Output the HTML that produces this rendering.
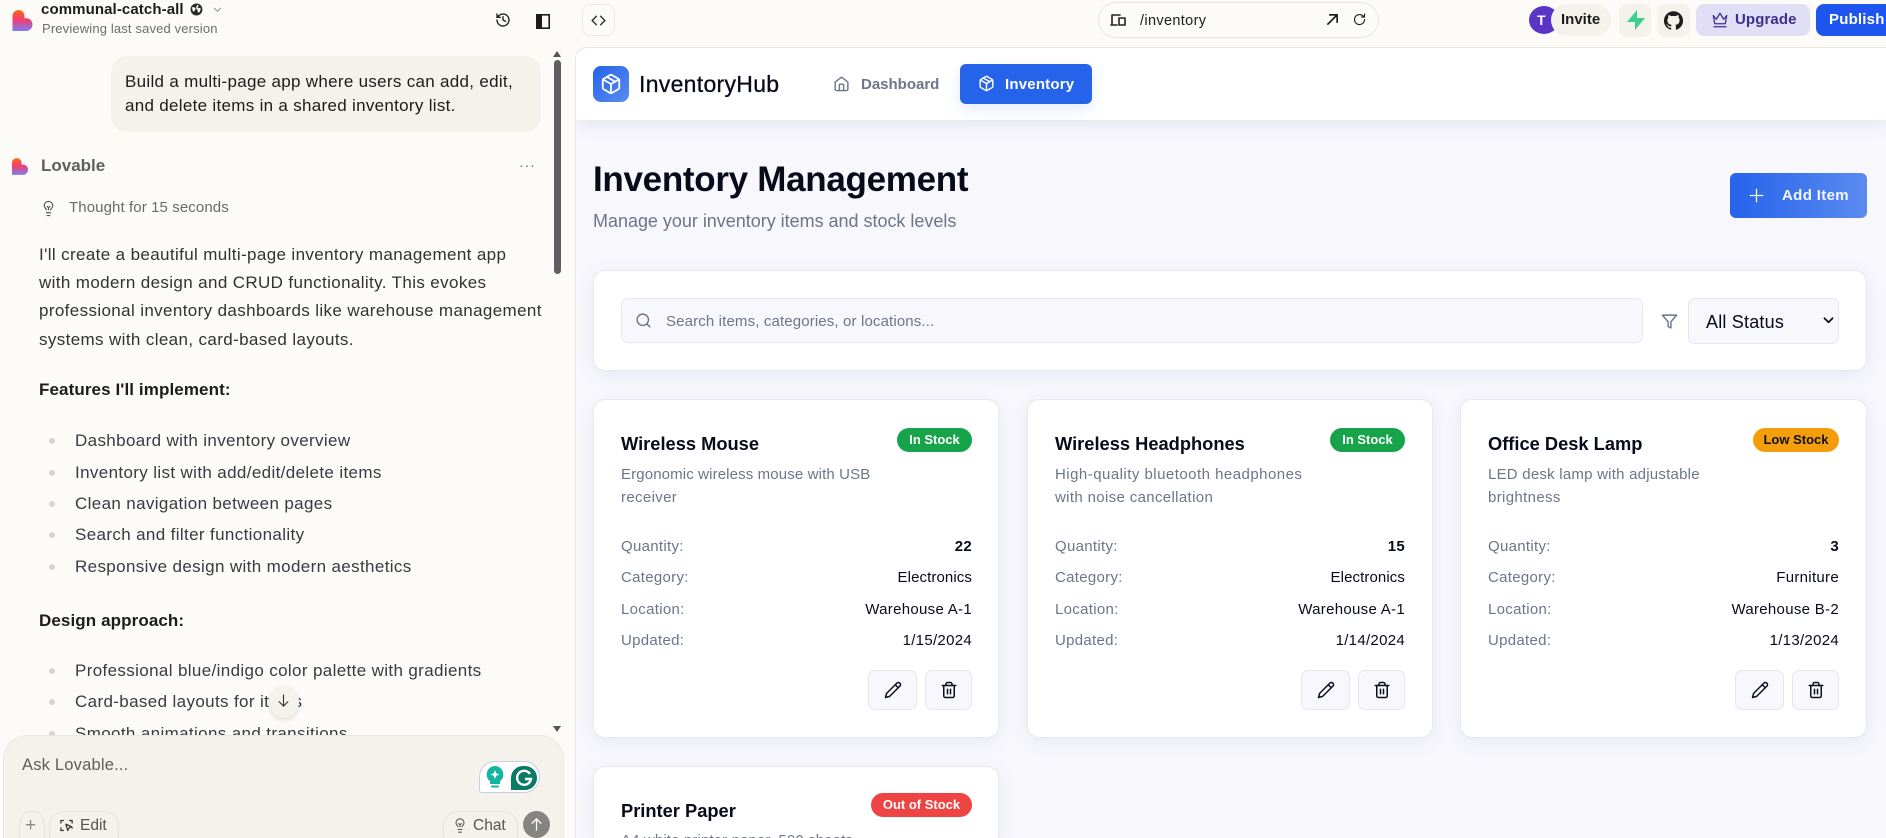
<!DOCTYPE html>
<html><head><meta charset="utf-8"><title>InventoryHub</title>
<style>
*{box-sizing:border-box;margin:0;padding:0}
html,body{width:1886px;height:838px;overflow:hidden;background:#fcfbf8;font-family:"Liberation Sans",sans-serif}
#root{position:relative;width:1886px;height:838px;overflow:hidden;background:#fcfbf8}
.a,.t{position:absolute}
.t{white-space:nowrap;line-height:20px}
svg{position:absolute;overflow:visible}
.ic{fill:none;stroke:currentColor;stroke-width:2;stroke-linecap:round;stroke-linejoin:round}
.p{font-size:17px;color:#33322f;letter-spacing:.37px}
.b{font-size:17px;color:#1c1c1a;font-weight:700;letter-spacing:.1px}
.li{font-size:17px;color:#3a3a40;letter-spacing:.36px;left:75px}
.dot{position:absolute;left:49px;width:6px;height:6px;border-radius:50%;background:#d5d5d5}
.card{position:absolute;background:#fff;border:1px solid #e6e9f1;border-radius:12px;box-shadow:0 4px 18px rgba(90,100,150,.09);width:406px;height:339px}
.title{left:27px;top:34px;font-size:18.3px;font-weight:700;color:#070b1a}
.desc{left:27px;font-size:15px;color:#6b7688;letter-spacing:.35px}
.lab{left:27px;font-size:15px;color:#6b7688;letter-spacing:.3px}
.val{right:26px;font-size:15px;color:#070b1a;letter-spacing:.3px}
.badge{position:absolute;right:26px;top:28px;height:24px;border-radius:12px;color:#fff;font-size:13px;font-weight:700;line-height:24px;text-align:center}
.btn{position:absolute;top:270px;width:47px;height:40px;background:#f7f7fc;border:1px solid #e3e6ef;border-radius:7px;color:#0b1020}
.btn.e{width:49px;right:81px}
.btn.d{right:26px}
.s .val,.s .badge,.s .btn.d{right:27px}
.s .btn.e{right:82px}
.tb{position:absolute;border-radius:8px}
.pill{position:absolute;top:811px;height:27px;border:1px solid #e6e3dc;border-bottom:0;border-radius:15px 15px 0 0}
</style></head><body><div id="root">
<svg width="0" height="0" style="position:absolute"><defs>
<linearGradient id="lg" x1="0" y1="0" x2="0" y2="1"><stop offset="0" stop-color="#ff6a1a"/><stop offset=".45" stop-color="#f23d6b"/><stop offset="1" stop-color="#7f7cf7"/></linearGradient>
<symbol id="pk" viewBox="0 0 24 24"><path d="m7.5 4.27 9 5.15"/><path d="M21 8a2 2 0 0 0-1-1.73l-7-4a2 2 0 0 0-2 0l-7 4A2 2 0 0 0 3 8v8a2 2 0 0 0 1 1.73l7 4a2 2 0 0 0 2 0l7-4A2 2 0 0 0 21 16Z"/><path d="m3.3 7 8.7 5 8.7-5"/><path d="M12 22V12"/></symbol>
<symbol id="pen" viewBox="0 0 24 24"><path d="M17 3a2.85 2.83 0 1 1 4 4L7.5 20.5 2 22l1.5-5.5Z"/><path d="m15 5 4 4"/></symbol>
<symbol id="tr" viewBox="0 0 24 24"><path d="M3 6h18"/><path d="M19 6v14c0 1-1 2-2 2H7c-1 0-2-1-2-2V6"/><path d="M8 6V4c0-1 1-2 2-2h4c1 0 2 1 2 2v2"/><path d="M10 11v6"/><path d="M14 11v6"/></symbol>
<symbol id="bulb" viewBox="0 0 24 24"><path d="M15 14c.2-1 .7-1.7 1.5-2.5 1-.9 1.5-2.2 1.5-3.5A6 6 0 0 0 6 8c0 1 .2 2.2 1.5 3.5.7.7 1.3 1.5 1.5 2.5"/><path d="M9 18h6"/><path d="M10 22h4"/><path d="M10 9l2 2 2-2M12 11v3"/></symbol>
</defs></svg>

<!-- LEFT PANEL -->
<svg style="left:12px;top:10px" width="21" height="21" viewBox="0 0 20 21"><path d="M6 0C9.3 0 12 2.7 12 6V8.2H14C17.3 8.2 20 11 20 14.4C20 17.8 17.3 21 14 21H0V6C0 2.7 2.7 0 6 0Z" fill="url(#lg)"/></svg>
<div class="t" style="left:41px;top:0;font-size:15px;font-weight:700;color:#1c1c1a;letter-spacing:.1px">communal-catch-all</div>
<svg style="left:190px;top:3px" width="13" height="13" viewBox="0 0 24 24"><circle cx="12" cy="12" r="11" fill="#2a2a2a"/><path d="M4 8c3-1 5 0 6 2s-1 3-2 5-4 0-4-7zM14 3c3 1 1 4 0 5s2 2 4 1 2 4 0 7-4 1-4-2-3-3-3-5 2-3 3-6z" fill="#fcfbf8"/></svg>
<svg class="ic" style="left:212px;top:4px;color:#8a8a86" width="11" height="11" viewBox="0 0 24 24"><path d="m5 9 7 7 7-7"/></svg>
<div class="t" style="left:42px;top:19px;font-size:13px;color:#6d6d6a;letter-spacing:.15px">Previewing last saved version</div>
<svg class="ic" style="left:495px;top:12px;color:#1c1c1a" width="16" height="16" viewBox="0 0 24 24"><path d="M3 12a9 9 0 1 0 3-6.7L3 8"/><path d="M3 3v5h5"/><path d="M12 7v5l4 2"/></svg>
<svg style="left:536px;top:14px" width="14" height="15" viewBox="0 0 14 15"><rect x=".8" y=".8" width="12.4" height="13.4" fill="none" stroke="#1c1c1a" stroke-width="1.6"/><rect x="1" y="1" width="5" height="13" fill="#1c1c1a"/></svg>

<div class="a" style="left:111px;top:56px;width:430px;height:76px;background:#f5f2ec;border-radius:16px"></div>
<div class="t" style="left:125px;top:72px;font-size:17px;color:#1c1c1a;letter-spacing:.3px">Build a multi-page app where users can add, edit,</div>
<div class="t" style="left:125px;top:96px;font-size:17px;color:#1c1c1a;letter-spacing:.3px">and delete items in a shared inventory list.</div>

<svg style="left:12px;top:158px" width="16" height="17" viewBox="0 0 20 21"><path d="M6 0C9.3 0 12 2.7 12 6V8.2H14C17.3 8.2 20 11 20 14.4C20 17.8 17.3 21 14 21H0V6C0 2.7 2.7 0 6 0Z" fill="url(#lg)"/></svg>
<div class="t" style="left:41px;top:156px;font-size:17px;font-weight:700;color:#5f5f5c">Lovable</div>
<div class="t" style="left:519px;top:156px;font-size:15px;color:#777;letter-spacing:.5px">···</div>
<svg class="ic" style="left:40px;top:200px;color:#55544f;stroke-width:1.6" width="17" height="17"><use href="#bulb"/></svg>
<div class="t" style="left:69px;top:198px;font-size:15px;color:#6b6a66;letter-spacing:.1px">Thought for 15 seconds</div>

<div class="t p" style="left:39px;top:245px">I'll create a beautiful multi-page inventory management app</div>
<div class="t p" style="left:39px;top:273px">with modern design and CRUD functionality. This evokes</div>
<div class="t p" style="left:39px;top:301px">professional inventory dashboards like warehouse management</div>
<div class="t p" style="left:39px;top:330px">systems with clean, card-based layouts.</div>
<div class="t b" style="left:39px;top:380px">Features I'll implement:</div>
<span class="dot" style="top:438px"></span><div class="t li" style="top:431px">Dashboard with inventory overview</div>
<span class="dot" style="top:470px"></span><div class="t li" style="top:463px">Inventory list with add/edit/delete items</div>
<span class="dot" style="top:501px"></span><div class="t li" style="top:494px">Clean navigation between pages</div>
<span class="dot" style="top:532px"></span><div class="t li" style="top:525px">Search and filter functionality</div>
<span class="dot" style="top:564px"></span><div class="t li" style="top:557px">Responsive design with modern aesthetics</div>
<div class="t b" style="left:39px;top:611px">Design approach:</div>
<span class="dot" style="top:668px"></span><div class="t li" style="top:661px">Professional blue/indigo color palette with gradients</div>
<span class="dot" style="top:699px"></span><div class="t li" style="top:692px">Card-based layouts for items</div>
<span class="dot" style="top:731px"></span><div class="t li" style="top:724px">Smooth animations and transitions</div>

<!-- scrollbar -->
<div class="a" style="left:554px;top:60px;width:7px;height:214px;background:#5f5f5f;border-radius:4px"></div>
<div class="a" style="left:553px;top:51px;width:0;height:0;border:4.5px solid transparent;border-bottom:6px solid #555;border-top:0"></div>
<div class="a" style="left:553px;top:726px;width:0;height:0;border:4.5px solid transparent;border-top:6px solid #555;border-bottom:0"></div>

<!-- down button -->
<div class="a" style="left:269px;top:686px;width:30px;height:32px;border-radius:50%;background:#f5f2ec;box-shadow:0 2px 5px rgba(0,0,0,.12)"></div>
<svg class="ic" style="left:276px;top:693px;color:#333;stroke-width:1.8" width="15" height="15" viewBox="0 0 24 24"><path d="M12 3v18"/><path d="m5 14 7 7 7-7"/></svg>

<!-- input -->
<div class="a" style="left:3px;top:735px;width:561px;height:103px;background:#f5f2ec;border:1px solid #ebe8e1;border-bottom:0;border-radius:24px 24px 0 0"></div>
<div class="t" style="left:22px;top:755px;font-size:16.5px;color:#5e5d59;letter-spacing:.2px">Ask Lovable...</div>
<div class="a" style="left:479px;top:761px;width:61px;height:32px;background:#fff;border:1px solid #c8cde8;border-radius:16px 16px 16px 3px"></div>
<svg style="left:486px;top:766px" width="18" height="24" viewBox="0 0 18 24"><path d="M9 0a8.500 8.500 0 0 1 5 15.300V18H4v-2.700A8.500 8.500 0 0 1 9 0z" fill="#12b5a0"/><rect x="5" y="19.500" width="8" height="2" rx="1" fill="#12b5a0"/><path d="M9 4l1.300 3.200L13.500 8.500l-3.200 1.300L9 13 7.700 9.800 4.500 8.500l3.200-1.300z" fill="#fff"/></svg>
<svg style="left:511px;top:766px" width="26" height="24" viewBox="0 0 26 24"><path d="M12 0h2a12 12 0 0 1 0 24H0V12A12 12 0 0 1 12 0z" fill="#0a7a63"/><path d="M19 8A7 7 0 1 0 20 13h-6" fill="none" stroke="#fff" stroke-width="2.400"/></svg>
<div class="pill" style="left:19px;width:26px"></div>
<div class="t" style="left:25px;top:816px;font-size:19px;color:#8b8a86">+</div>
<div class="pill" style="left:49px;width:70px"></div>
<svg class="ic" style="left:59px;top:818px;color:#333;stroke-width:2" width="15" height="15" viewBox="0 0 24 24"><path d="M3 8V4h4M17 4h4v4M3 16v4h4M21 15v1M11 10l9 4-4 2-2 4z"/></svg>
<div class="t" style="left:80px;top:816px;font-size:15.5px;color:#55544f">Edit</div>
<div class="pill" style="left:443px;width:75px"></div>
<svg class="ic" style="left:452px;top:817px;color:#55544f;stroke-width:1.6" width="16" height="17"><use href="#bulb"/></svg>
<div class="t" style="left:473px;top:816px;font-size:15.5px;color:#55544f">Chat</div>
<div class="a" style="left:523px;top:811px;width:27px;height:27px;border-radius:50%;background:#858480"></div>
<svg class="ic" style="left:529px;top:817px;color:#fff" width="15" height="15" viewBox="0 0 24 24"><path d="M12 21V3"/><path d="m5 10 7-7 7 7"/></svg>

<!-- TOP BAR -->
<div class="a" style="left:582px;top:4px;width:33px;height:32px;border:1px solid #ecebe6;border-radius:8px"></div>
<svg class="ic" style="left:590px;top:12px;color:#333;stroke-width:2" width="17" height="17" viewBox="0 0 24 24"><path d="m9 6-6 6 6 6"/><path d="m15 6 6 6-6 6"/></svg>
<div class="a" style="left:1098px;top:2px;width:281px;height:36px;border:1px solid #e8e6e0;border-radius:18px"></div>
<svg class="ic" style="left:1110px;top:12px;color:#222;stroke-width:1.6" width="16" height="16" viewBox="0 0 16 16"><path d="M2 13V3h8M1 13h6M9 6h6v7H9z"/></svg>
<div class="t" style="left:1140px;top:11px;font-size:14.5px;color:#1c1c1a;letter-spacing:.35px">/inventory</div>
<svg class="ic" style="left:1326px;top:13px;color:#222;stroke-width:1.8" width="13" height="13" viewBox="0 0 14 14"><path d="M2 12 12 2M4 2h8v8"/></svg>
<svg class="ic" style="left:1352px;top:12px;color:#222;stroke-width:1.8" width="15" height="15" viewBox="0 0 24 24"><path d="M20 12a8 8 0 1 1-3-6.200L20 8"/><path d="M20 3v5h-5"/></svg>

<div class="a" style="left:1529px;top:6px;width:30px;height:28px;border-radius:50%;background:#5b35c5"></div>
<div class="t" style="left:1537px;top:10px;font-size:14px;font-weight:700;color:#fff">T</div>
<div class="a" style="left:1551px;top:4px;width:60px;height:32px;background:#f5f2ec;border-radius:16px"></div>
<div class="t" style="left:1561px;top:10px;font-size:15px;font-weight:700;color:#1c1c1a">Invite</div>
<div class="tb" style="left:1619px;top:4px;width:32px;height:33px;background:#f5f2ec"></div>
<svg style="left:1627px;top:10px" width="18" height="20" viewBox="0 0 18 20"><path d="M10 0v8h8L8 20v-8H0z" fill="#3ecf8e"/></svg>
<div class="tb" style="left:1657px;top:4px;width:33px;height:33px;background:#f5f2ec"></div>
<svg style="left:1664px;top:11px" width="19" height="19" viewBox="0 0 24 24"><path fill="#1c1c1a" d="M12 .3a12 12 0 0 0-3.800 23.400c.6.100.8-.3.800-.6v-2c-3.300.7-4-1.600-4-1.600-.6-1.400-1.400-1.800-1.400-1.800-1-.7.100-.7.100-.7 1.200.1 1.800 1.200 1.800 1.200 1 1.800 2.800 1.300 3.500 1 .1-.8.400-1.300.8-1.600-2.700-.3-5.500-1.300-5.500-6 0-1.200.5-2.300 1.300-3.100-.2-.4-.6-1.600 0-3.200 0 0 1-.3 3.400 1.200a11.500 11.500 0 0 1 6 0c2.300-1.500 3.300-1.200 3.300-1.200.7 1.600.2 2.800.1 3.200.8.800 1.300 1.900 1.300 3.100 0 4.600-2.800 5.700-5.500 6 .4.400.8 1.100.8 2.200v3.300c0 .3.200.7.800.6A12 12 0 0 0 12 .3"/></svg>
<div class="tb" style="left:1696px;top:4px;width:114px;height:32px;background:#e1dff6"></div>
<svg class="ic" style="left:1711px;top:11px;color:#3f2f8f;stroke-width:1.7" width="18" height="18" viewBox="0 0 24 24"><path d="M3 6l4 5 5-8 5 8 4-5-2 11H5z"/><path d="M4 21h16"/></svg>
<div class="t" style="left:1735px;top:10px;font-size:15px;font-weight:700;color:#3f2f8f;letter-spacing:.1px">Upgrade</div>
<div class="tb" style="left:1816px;top:4px;width:70px;height:32px;background:#1d55ee;border-radius:8px 0 0 8px"></div>
<div class="t" style="left:1829px;top:10px;font-size:15px;font-weight:700;color:#fff;letter-spacing:.2px;width:57px;overflow:hidden">Publish</div>

<!-- PREVIEW -->
<div class="a" style="left:575px;top:47px;width:1311px;height:791px;background:#f7f7fc;border:1px solid #e8e7e2;border-right:0;border-bottom:0;border-radius:12px 0 0 0;overflow:hidden">
  <div class="a" style="left:0;top:0;width:1310px;height:72px;background:#fff;box-shadow:0 4px 16px rgba(90,100,150,.13)"></div>
</div>
<div class="a" style="left:593px;top:66px;width:36px;height:36px;border-radius:8px;background:linear-gradient(135deg,#2563eb,#5b8bf0)"></div>
<svg class="ic" style="left:600px;top:73px;color:#fff" width="22" height="22"><use href="#pk"/></svg>
<div class="t" style="left:639px;top:74px;font-size:23px;color:#070b1a;-webkit-text-stroke:.3px #070b1a;letter-spacing:.3px">InventoryHub</div>
<svg class="ic" style="left:833px;top:75px;color:#6b7688" width="17" height="17" viewBox="0 0 24 24"><path d="m3 10 9-7 9 7v10a2 2 0 0 1-2 2H5a2 2 0 0 1-2-2z"/><path d="M9 22v-8a1 1 0 0 1 1-1h4a1 1 0 0 1 1 1v8"/></svg>
<div class="t" style="left:861px;top:75px;font-size:15px;font-weight:700;color:#6b7688">Dashboard</div>
<div class="a" style="left:960px;top:64px;width:132px;height:40px;background:#2563eb;border-radius:6px;box-shadow:0 6px 14px rgba(37,99,235,.12)"></div>
<svg class="ic" style="left:978px;top:75px;color:#fff" width="17" height="17"><use href="#pk"/></svg>
<div class="t" style="left:1005px;top:75px;font-size:15px;font-weight:700;color:#fff;letter-spacing:.2px">Inventory</div>

<div class="t" style="left:593px;top:169px;font-size:35px;font-weight:700;color:#070b1a;letter-spacing:-.3px;line-height:22px">Inventory Management</div>
<div class="t" style="left:593px;top:211px;font-size:18px;color:#6b7688;letter-spacing:-.02px">Manage your inventory items and stock levels</div>

<div class="a" style="left:1730px;top:173px;width:137px;height:45px;border-radius:6px;background:linear-gradient(90deg,#2563eb,#5b8bf0)"></div>
<svg class="ic" style="left:1749px;top:188px;color:#fff" width="15" height="15" viewBox="0 0 24 24"><path d="M12 2v20M2 12h20"/></svg>
<div class="t" style="left:1782px;top:186px;font-size:15px;font-weight:700;color:#f3f6ff;letter-spacing:.35px">Add Item</div>

<div class="card" style="left:593px;top:270px;width:1274px;height:101px"></div>
<div class="a" style="left:621px;top:298px;width:1022px;height:45px;background:#f7f7fc;border:1px solid #e3e6ef;border-radius:7px"></div>
<svg class="ic" style="left:635px;top:312px;color:#6b7688" width="17" height="17" viewBox="0 0 24 24"><circle cx="11" cy="11" r="8"/><path d="m21 21-4.300-4.300"/></svg>
<div class="t" style="left:666px;top:312px;font-size:15px;color:#6b7688;letter-spacing:.14px">Search items, categories, or locations...</div>
<svg class="ic" style="left:1661px;top:313px;color:#6b7688" width="17" height="17" viewBox="0 0 24 24"><path d="M22 3H2l8 9.460V19l4 2v-8.540z"/></svg>
<div class="a" style="left:1688px;top:298px;width:151px;height:46px;background:#f7f7fc;border:1px solid #e3e6ef;border-radius:7px"></div>
<div class="t" style="left:1706px;top:312px;font-size:18px;color:#070b1a;letter-spacing:.2px">All Status</div>
<svg class="ic" style="left:1823px;top:316px;color:#111;stroke-width:4" width="11" height="9" viewBox="0 0 24 20"><path d="m3 5 9 9 9-9"/></svg>

<!-- CARD 1 -->
<div class="card" style="left:593px;top:399px">
 <div class="t title">Wireless Mouse</div>
 <div class="badge" style="width:75px;background:#16a34a">In Stock</div>
 <div class="t desc" style="top:65px;letter-spacing:.13px">Ergonomic wireless mouse with USB</div>
 <div class="t desc" style="top:88px">receiver</div>
 <div class="t lab" style="top:137px">Quantity:</div><div class="t val" style="top:137px;font-weight:700">22</div>
 <div class="t lab" style="top:168px">Category:</div><div class="t val" style="top:168px;letter-spacing:.1px">Electronics</div>
 <div class="t lab" style="top:200px">Location:</div><div class="t val" style="top:200px">Warehouse A-1</div>
 <div class="t lab" style="top:231px">Updated:</div><div class="t val" style="top:231px">1/15/2024</div>
 <div class="btn e"><svg class="ic" style="left:15px;top:10px" width="18" height="18"><use href="#pen"/></svg></div>
 <div class="btn d"><svg class="ic" style="left:14px;top:10px" width="18" height="18"><use href="#tr"/></svg></div>
</div>
<!-- CARD 2 -->
<div class="card s" style="left:1027px;top:399px;width:406px">
 <div class="t title">Wireless Headphones</div>
 <div class="badge" style="width:75px;background:#16a34a">In Stock</div>
 <div class="t desc" style="top:65px;letter-spacing:.47px">High-quality bluetooth headphones</div>
 <div class="t desc" style="top:88px">with noise cancellation</div>
 <div class="t lab" style="top:137px">Quantity:</div><div class="t val" style="top:137px;font-weight:700">15</div>
 <div class="t lab" style="top:168px">Category:</div><div class="t val" style="top:168px;letter-spacing:.1px">Electronics</div>
 <div class="t lab" style="top:200px">Location:</div><div class="t val" style="top:200px">Warehouse A-1</div>
 <div class="t lab" style="top:231px">Updated:</div><div class="t val" style="top:231px">1/14/2024</div>
 <div class="btn e"><svg class="ic" style="left:15px;top:10px" width="18" height="18"><use href="#pen"/></svg></div>
 <div class="btn d"><svg class="ic" style="left:14px;top:10px" width="18" height="18"><use href="#tr"/></svg></div>
</div>
<!-- CARD 3 -->
<div class="card s" style="left:1460px;top:399px;width:407px">
 <div class="t title">Office Desk Lamp</div>
 <div class="badge" style="width:86px;background:#f59e0b;color:#111">Low Stock</div>
 <div class="t desc" style="top:65px;letter-spacing:.23px">LED desk lamp with adjustable</div>
 <div class="t desc" style="top:88px">brightness</div>
 <div class="t lab" style="top:137px">Quantity:</div><div class="t val" style="top:137px;font-weight:700">3</div>
 <div class="t lab" style="top:168px">Category:</div><div class="t val" style="top:168px">Furniture</div>
 <div class="t lab" style="top:200px">Location:</div><div class="t val" style="top:200px">Warehouse B-2</div>
 <div class="t lab" style="top:231px">Updated:</div><div class="t val" style="top:231px">1/13/2024</div>
 <div class="btn e"><svg class="ic" style="left:15px;top:10px" width="18" height="18"><use href="#pen"/></svg></div>
 <div class="btn d"><svg class="ic" style="left:14px;top:10px" width="18" height="18"><use href="#tr"/></svg></div>
</div>
<!-- CARD 4 -->
<div class="card" style="left:593px;top:766px;height:72px;border-bottom:0;border-radius:12px 12px 0 0;overflow:hidden">
 <div class="t title">Printer Paper</div>
 <div class="badge" style="width:101px;top:26px;background:#ef4444">Out of Stock</div>
 <div class="t desc" style="top:64px;height:7px;overflow:hidden;letter-spacing:.13px">A4 white printer paper, 500 sheets</div>
</div>
</div></body></html>
